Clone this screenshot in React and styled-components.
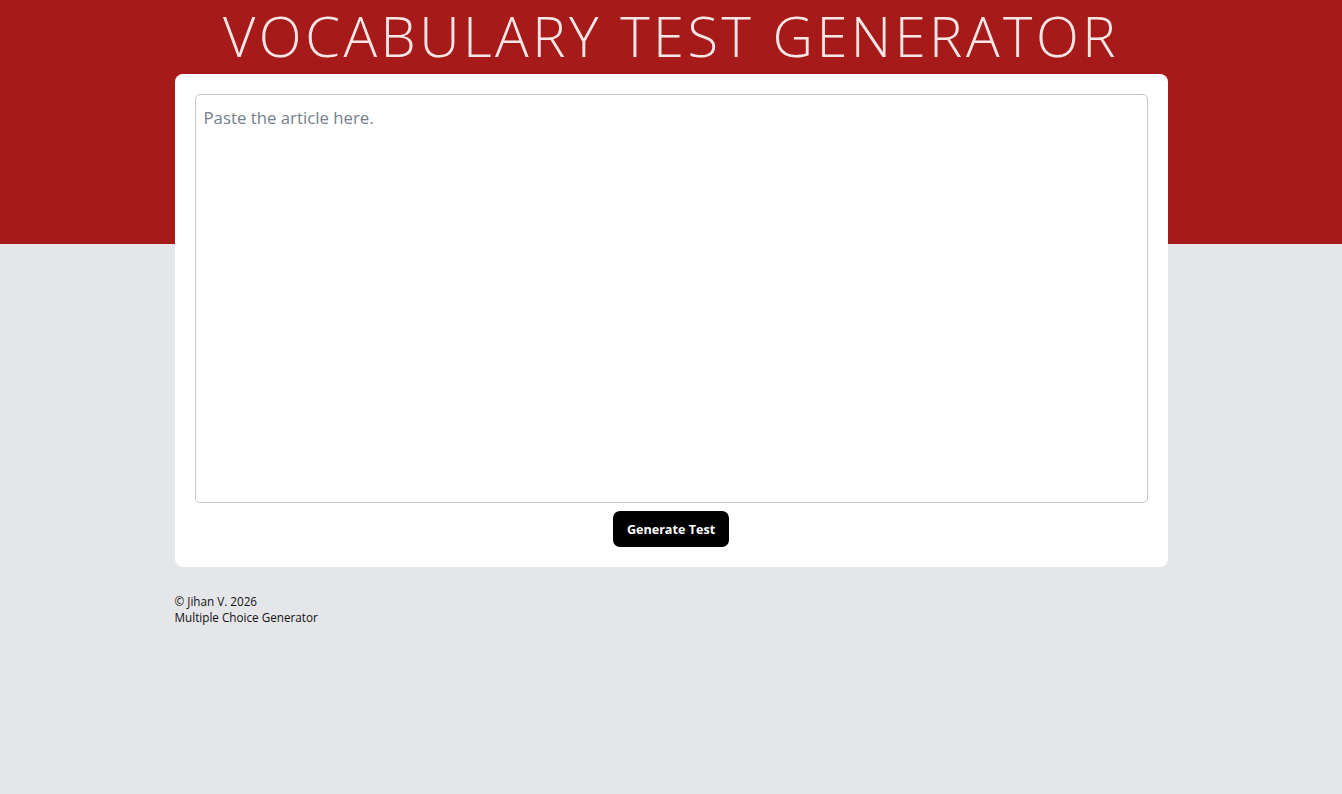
import React from 'react';
import styled, { createGlobalStyle } from 'styled-components';

const GlobalStyle = createGlobalStyle`
  html, body {
    margin: 0;
    padding: 0;
  }
  body {
    min-height: 794px;
    font-family: "Open Sans", "Noto Sans", sans-serif;
    background: linear-gradient(to bottom, #a61a1a 0, #a61a1a 244px, #e5e6e9 244px, #e5e6e9 100%);
  }
`;

const Page = styled.div`
  display: flex;
  flex-direction: column;
  align-items: center;
`;

const Title = styled.h1`
  margin: 0;
  height: 74px;
  line-height: 70px;
  font-family: "Open Sans", sans-serif;
  font-weight: 300;
  font-size: 56px;
  letter-spacing: 3.5px;
  color: #f6e6e6;
  text-align: center;
  white-space: nowrap;
`;

const Card = styled.div`
  box-sizing: border-box;
  width: 993px;
  background: #fff;
  border-radius: 8px;
  padding: 20px;
  display: flex;
  flex-direction: column;
  align-items: center;
  gap: 8px;
`;

const Article = styled.textarea`
  box-sizing: border-box;
  width: 100%;
  height: 409px;
  border: 1px solid #c8c8c8;
  border-radius: 5px;
  padding: 11px 8px;
  font-family: "Open Sans", sans-serif;
  font-size: 16.8px;
  color: #333;
  resize: none;
  outline: none;

  &::placeholder {
    color: #75808c;
  }
`;

const Button = styled.button`
  height: 36px;
  padding: 0 14px;
  border: none;
  border-radius: 7px;
  background: #000;
  color: #fff;
  font-family: "Open Sans", sans-serif;
  font-weight: 700;
  font-size: 12.6px;
  cursor: pointer;
`;

const Footer = styled.footer`
  box-sizing: border-box;
  width: 993px;
  margin-top: 26px;
  font-family: "Open Sans", sans-serif;
  font-size: 11.7px;
  line-height: 16px;
  color: #111;
`;

const FooterLine = styled.div``;

export default function App() {
  return (
    <>
      <GlobalStyle />
      <Page>
        <Title>VOCABULARY TEST GENERATOR</Title>
        <Card>
          <Article placeholder="Paste the article here." />
          <Button>Generate Test</Button>
        </Card>
        <Footer>
          <FooterLine>© Jihan V. 2026</FooterLine>
          <FooterLine>Multiple Choice Generator</FooterLine>
        </Footer>
      </Page>
    </>
  );
}
